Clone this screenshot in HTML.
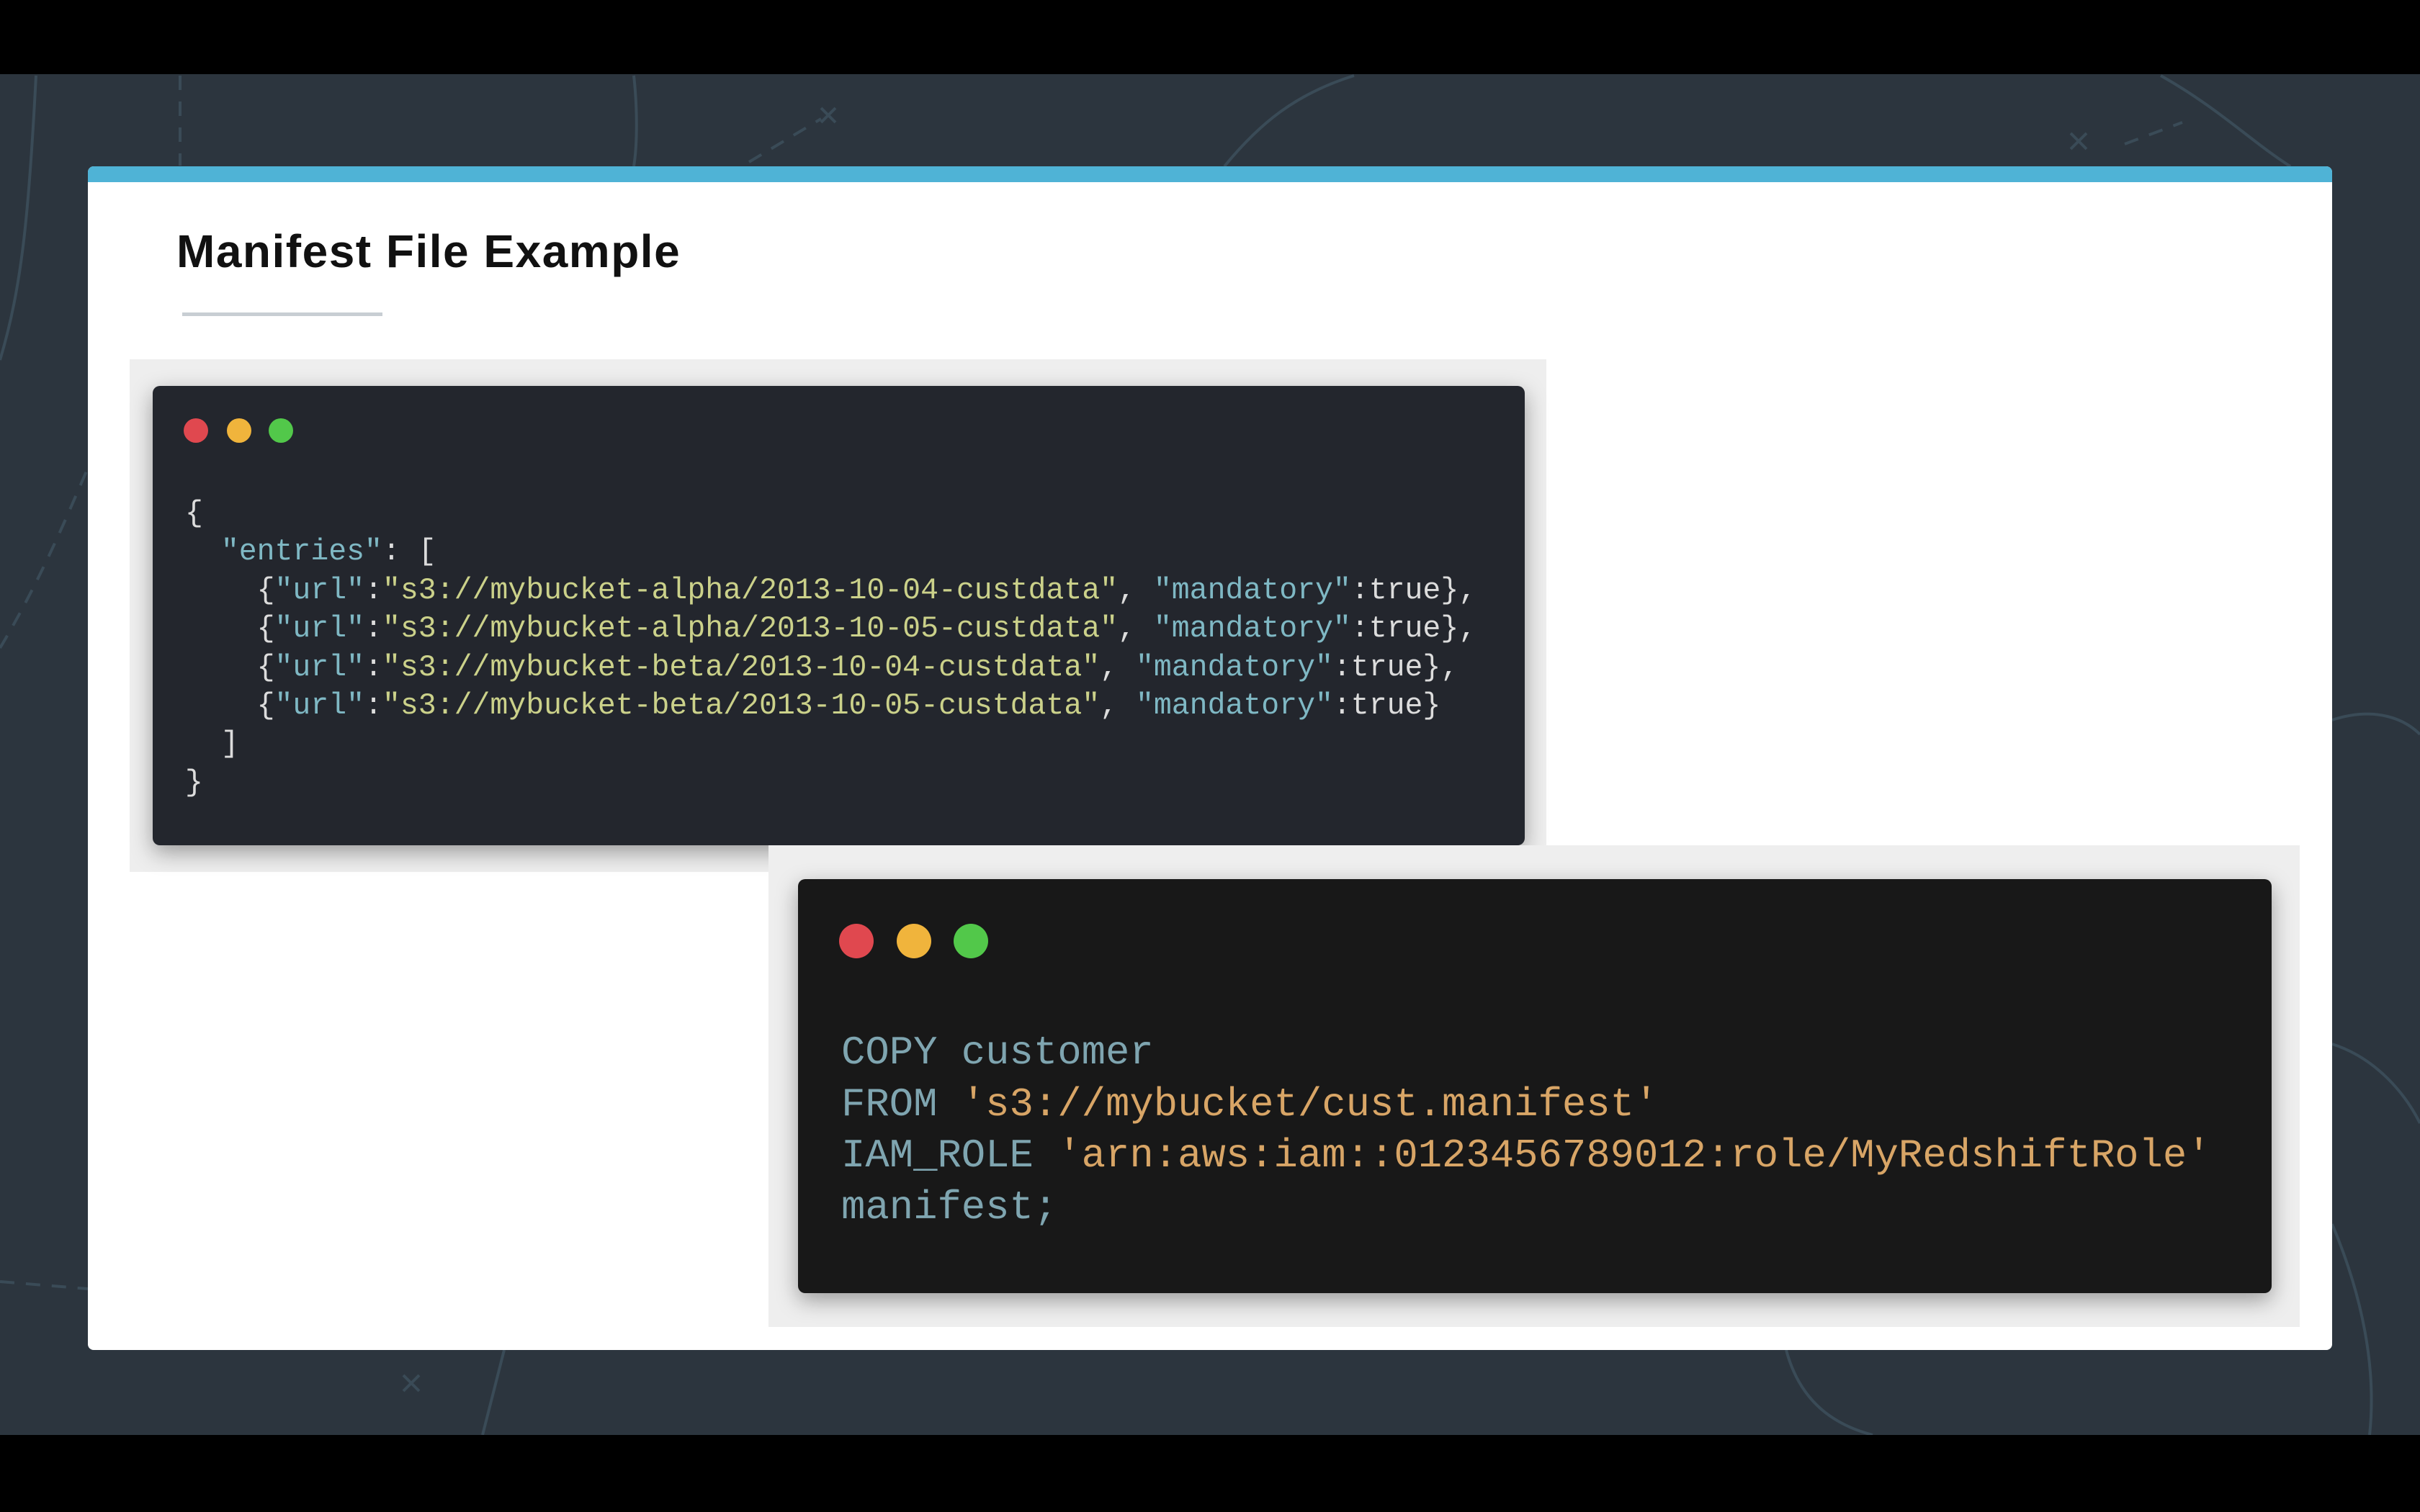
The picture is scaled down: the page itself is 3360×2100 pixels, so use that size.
<!DOCTYPE html>
<html><head><meta charset="utf-8"><style>
html,body{margin:0;padding:0}
body{width:3360px;height:2100px;position:relative;overflow:hidden;background:#2c353e;font-family:"Liberation Sans",sans-serif}
.bar{position:absolute;left:0;width:3360px;background:#000}
.card{position:absolute;left:122px;top:231px;width:3116px;height:1644px;background:#fff;border-radius:8px;overflow:hidden}
.card .top{position:absolute;left:0;top:0;width:100%;height:22px;background:#4fb3d6}
.title{position:absolute;left:245px;top:312px;font-size:64px;font-weight:bold;color:#111;letter-spacing:1.5px}
.ul{position:absolute;left:253px;top:434px;width:278px;height:5px;background:#c8ced3}
.back{position:absolute;background:#eeeeee}
.box{position:absolute;border-radius:10px;box-shadow:0 10px 30px rgba(0,0,0,.35)}
.dot{position:absolute;border-radius:50%}
pre{margin:0;position:absolute;font-family:"Liberation Mono","DejaVu Sans Mono",monospace;white-space:pre}
.k{color:#7fb8c4}.s{color:#cbd18a}.p{color:#dcdcdc}
.kw{color:#7fa5b0}.st{color:#d8a566}
</style></head><body>
<svg style="position:absolute;left:0;top:0" width="3360" height="2100">
<g fill="none" stroke="#3a4b57" stroke-width="4">
<path d="M50 105 C40 300 30 400 0 500"/>
<path d="M250 105 L250 230" stroke-dasharray="20 16"/>
<path d="M880 105 C885 150 885 200 880 231"/>
<path d="M1040 225 L1140 165" stroke-dasharray="20 16"/>
<path d="M1700 231 C1750 170 1800 130 1880 105"/>
<path d="M2950 200 L3030 170" stroke-dasharray="20 16"/>
<path d="M3000 105 C3080 150 3130 200 3180 231"/>
<path d="M3238 1000 C3300 980 3340 1000 3360 1020"/>
<path d="M3238 1450 C3300 1470 3340 1520 3360 1560"/>
<path d="M0 1780 L122 1790" stroke-dasharray="20 16"/>
<path d="M700 1875 L670 1993"/>
<path d="M2480 1875 C2500 1950 2550 1980 2600 1993"/>
<path d="M3238 1700 C3280 1800 3300 1900 3290 1993"/>
<path d="M0 900 C60 800 100 700 122 650" stroke-dasharray="20 16"/>
</g>
<g stroke="#3a4b57" stroke-width="4"><path d="M1140 150 l20 20 M1160 150 l-20 20"/><path d="M2875 185 l22 22 M2897 185 l-22 22"/><path d="M560 1910 l22 22 M582 1910 l-22 22"/></g>
</svg>
<div class="bar" style="top:0;height:103px"></div>
<div class="bar" style="top:1993px;height:107px"></div>
<div class="card"><div class="top"></div></div>
<div class="title">Manifest File Example</div>
<div class="ul"></div>
<div class="back" style="left:180px;top:499px;width:1967px;height:712px"></div>
<div class="box" style="left:212px;top:536px;width:1905px;height:638px;background:#23262d"></div>
<div class="dot" style="left:255px;top:581px;width:34px;height:34px;background:#e0484f"></div>
<div class="dot" style="left:315px;top:581px;width:34px;height:34px;background:#f0b43c"></div>
<div class="dot" style="left:373px;top:581px;width:34px;height:34px;background:#52c84a"></div>
<pre class="p" style="left:257px;top:687px;font-size:41.5px;line-height:53.4px">{
  <span class="k">"entries"</span>: [
    {<span class="k">"url"</span>:<span class="s">"s3://mybucket-alpha/2013-10-04-custdata"</span>, <span class="k">"mandatory"</span>:true},
    {<span class="k">"url"</span>:<span class="s">"s3://mybucket-alpha/2013-10-05-custdata"</span>, <span class="k">"mandatory"</span>:true},
    {<span class="k">"url"</span>:<span class="s">"s3://mybucket-beta/2013-10-04-custdata"</span>, <span class="k">"mandatory"</span>:true},
    {<span class="k">"url"</span>:<span class="s">"s3://mybucket-beta/2013-10-05-custdata"</span>, <span class="k">"mandatory"</span>:true}
  ]
}</pre>
<div class="back" style="left:1067px;top:1174px;width:2126px;height:669px"></div>
<div class="box" style="left:1108px;top:1221px;width:2046px;height:575px;background:#181818"></div>
<div class="dot" style="left:1165px;top:1283px;width:48px;height:48px;background:#e0484f"></div>
<div class="dot" style="left:1245px;top:1283px;width:48px;height:48px;background:#f0b43c"></div>
<div class="dot" style="left:1324px;top:1283px;width:48px;height:48px;background:#52c84a"></div>
<pre class="kw" style="left:1168px;top:1427px;font-size:55.6px;line-height:71.5px">COPY customer
FROM <span class="st">'s3://mybucket/cust.manifest'</span>
IAM_ROLE <span class="st">'arn:aws:iam::0123456789012:role/MyRedshiftRole'</span>
manifest;</pre>
</body></html>
